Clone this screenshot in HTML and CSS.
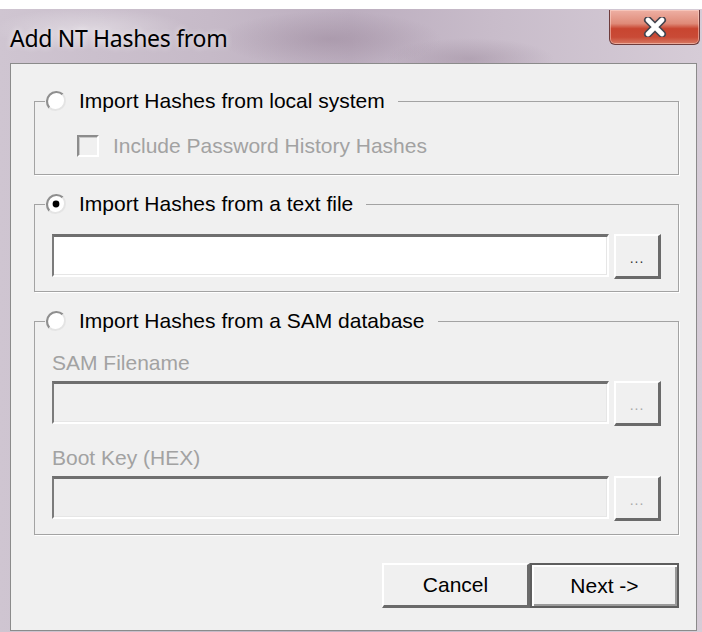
FILE: index.html
```html
<!DOCTYPE html>
<html lang="en">
<head>
<meta charset="utf-8">
<title>Add NT Hashes from</title>
<link rel="stylesheet" href="styles.css">
</head>
<body>
<div class="window">
  <div class="titlebar">
    <span class="title">Add NT Hashes from</span>
    <button class="close" type="button" aria-label="Close">
      <svg width="24" height="20" viewBox="0 0 24 20">
        <path d="M5 3 L19 17 M19 3 L5 17" stroke="#45454f" stroke-width="8" stroke-linecap="round" fill="none"/>
        <path d="M5 3 L19 17 M19 3 L5 17" stroke="#ffffff" stroke-width="4.6" stroke-linecap="round" fill="none"/>
      </svg>
    </button>
  </div>

  <div class="client">
    <fieldset class="group group-local">
      <legend class="option">
        <svg class="radio" width="22" height="22" viewBox="0 0 22 22">
          <circle cx="11" cy="11" r="9.5" fill="#fff"/>
          <path d="M4.3 17.7 A9.5 9.5 0 0 1 17.7 4.3" stroke="#8f8f8f" stroke-width="2.2" fill="none"/>
          <path d="M17.7 4.3 A9.5 9.5 0 0 1 4.3 17.7" stroke="#e4e4e4" stroke-width="2" fill="none"/>
        </svg>
        <span>Import Hashes from local system</span>
      </legend>
      <div class="check-row">
        <span class="checkbox"></span>
        <span class="muted">Include Password History Hashes</span>
      </div>
    </fieldset>

    <fieldset class="group group-text">
      <legend class="option">
        <svg class="radio" width="22" height="22" viewBox="0 0 22 22">
          <circle cx="11" cy="11" r="9.5" fill="#fff"/>
          <path d="M4.3 17.7 A9.5 9.5 0 0 1 17.7 4.3" stroke="#8f8f8f" stroke-width="2.2" fill="none"/>
          <path d="M17.7 4.3 A9.5 9.5 0 0 1 4.3 17.7" stroke="#e4e4e4" stroke-width="2" fill="none"/>
          <circle cx="11" cy="11" r="3.4" fill="#000"/>
        </svg>
        <span>Import Hashes from a text file</span>
      </legend>
      <div class="file-row">
        <span class="field"></span>
        <span class="browse">...</span>
      </div>
    </fieldset>

    <fieldset class="group group-sam">
      <legend class="option">
        <svg class="radio" width="22" height="22" viewBox="0 0 22 22">
          <circle cx="11" cy="11" r="9.5" fill="#fff"/>
          <path d="M4.3 17.7 A9.5 9.5 0 0 1 17.7 4.3" stroke="#8f8f8f" stroke-width="2.2" fill="none"/>
          <path d="M17.7 4.3 A9.5 9.5 0 0 1 4.3 17.7" stroke="#e4e4e4" stroke-width="2" fill="none"/>
        </svg>
        <span>Import Hashes from a SAM database</span>
      </legend>
      <div class="label muted">SAM Filename</div>
      <div class="file-row">
        <span class="field is-disabled"></span>
        <span class="browse is-disabled">...</span>
      </div>
      <div class="label label-gap muted">Boot Key (HEX)</div>
      <div class="file-row">
        <span class="field is-disabled"></span>
        <span class="browse is-disabled">...</span>
      </div>
    </fieldset>

    <div class="actions">
      <button class="btn" type="button">Cancel</button>
      <button class="btn btn-default" type="button">Next -&gt;</button>
    </div>
  </div>
</div>
</body>
</html>
```

FILE: styles.css
```css
html, body {
  margin: 0;
  padding: 0;
  background: #ffffff;
}

body {
  font-family: "Liberation Sans", Arial, sans-serif;
  font-size: 21px;
  color: #000;
}

/* Aero glass frame */
.window {
  margin-top: 9px;
  height: 623px;
  display: flex;
  flex-direction: column;
  background:
    radial-gradient(ellipse 160px 40px at 330px 30px, rgba(150, 130, 150, 0.45), rgba(150, 130, 150, 0) 70%),
    radial-gradient(ellipse 120px 30px at 470px 50px, rgba(140, 120, 140, 0.35), rgba(140, 120, 140, 0) 70%),
    radial-gradient(ellipse 140px 30px at 90px 20px, rgba(255, 255, 255, 0.35), rgba(255, 255, 255, 0) 70%),
    linear-gradient(to right, #cfc5d1 0%, #c6bac8 30%, #bcaebf 50%, #c8bcca 70%, #d6ccd7 100%);
}

.titlebar {
  height: 54px;
  display: flex;
  align-items: flex-start;
  flex: none;
}

.title {
  margin: 14px 0 0 10px;
  font-family: "Noto Sans", "Open Sans", sans-serif;
  font-size: 23px;
  line-height: 30px;
  letter-spacing: -0.3px;
  color: #000;
  text-shadow: 0 0 6px rgba(255, 255, 255, 0.8);
}

.close {
  margin: 1px 2px 0 auto;
  width: 91px;
  height: 35px;
  padding: 0;
  display: flex;
  align-items: center;
  justify-content: center;
  border: 1px solid #6e3c3c;
  border-top: none;
  border-radius: 0 0 6px 6px;
  background: linear-gradient(to bottom, #eeb0a4 0%, #df8a78 40%, #c84530 55%, #c94a36 80%, #d87a64 100%);
  box-shadow: inset 0 0 0 1px rgba(255, 220, 210, 0.5);
}

/* Dialog body */
.client {
  flex: 1;
  margin: 0 5px 1px 10px;
  border: 1px solid #8b8b8b;
  background: #f0f0f0;
  padding: 25px 17px 0 23px;
}

/* Etched group boxes */
.group {
  margin: 0;
  padding: 0 17px;
  min-width: 0;
  border: 1px solid #a3a3a3;
  box-shadow: 1px 1px 0 #ffffff;
}

.group + .group {
  margin-top: 17px;
}

.option {
  display: flex;
  align-items: center;
  gap: 12px;
  margin-left: -7px;
  padding: 0 13px 0 0;
  line-height: 24px;
}

.radio {
  display: block;
  flex: none;
}

.group-local {
  padding-top: 21px;
  padding-bottom: 16px;
}

.check-row {
  display: flex;
  align-items: center;
  gap: 14px;
  padding-left: 25px;
}

.checkbox {
  width: 18px;
  height: 18px;
  border-style: solid;
  border-width: 2px;
  border-color: #8c8c8c #ffffff #ffffff #8c8c8c;
  box-shadow: inset 1px 1px 0 #c8c8c8;
  background: #f0f0f0;
}

.muted {
  color: #a2a2a2;
}

.group-text {
  padding-top: 18px;
  padding-bottom: 12px;
}

.group-sam {
  padding-top: 18px;
  padding-bottom: 13px;
}

.label {
  line-height: 24px;
  margin-bottom: 6px;
}

.label-gap {
  margin-top: 20px;
}

.file-row {
  display: flex;
  align-items: flex-start;
  gap: 5px;
}

/* Sunken edit box */
.field {
  flex: 1;
  height: 38px;
  background: #ffffff;
  border-style: solid;
  border-width: 3px 2px 2px 2px;
  border-color: #6f6f6f #ffffff #ffffff #7b7b7b;
  box-shadow: inset -1px -1px 0 #e6e6e6;
}

.field.is-disabled {
  background: #f0f0f0;
}

/* Raised push button */
.browse {
  width: 42px;
  height: 36px;
  flex: none;
  display: flex;
  align-items: center;
  justify-content: center;
  border-style: solid;
  border-width: 2px 3px 3px 2px;
  border-color: #ffffff #6a6a6a #6a6a6a #ffffff;
  background: #f0f0f0;
  font-size: 14px;
  letter-spacing: 1px;
  color: #333;
  padding-top: 4px;
}

.browse.is-disabled {
  color: #a8a8a8;
}

.actions {
  display: flex;
  justify-content: flex-end;
  margin-top: 28px;
}

.btn {
  width: 148px;
  height: 45px;
  padding: 0;
  font-family: "Liberation Sans", Arial, sans-serif;
  font-size: 21px;
  color: #000;
  background: #f0f0f0;
  border-style: solid;
  border-width: 2px 3px 3px 2px;
  border-color: #ffffff #6a6a6a #6a6a6a #ffffff;
}

.btn-default {
  width: 149px;
  border: 2px solid #5e5e5e;
  box-shadow: inset 2px 2px 0 #ffffff, inset -2px -2px 0 #9a9a9a;
}
```
